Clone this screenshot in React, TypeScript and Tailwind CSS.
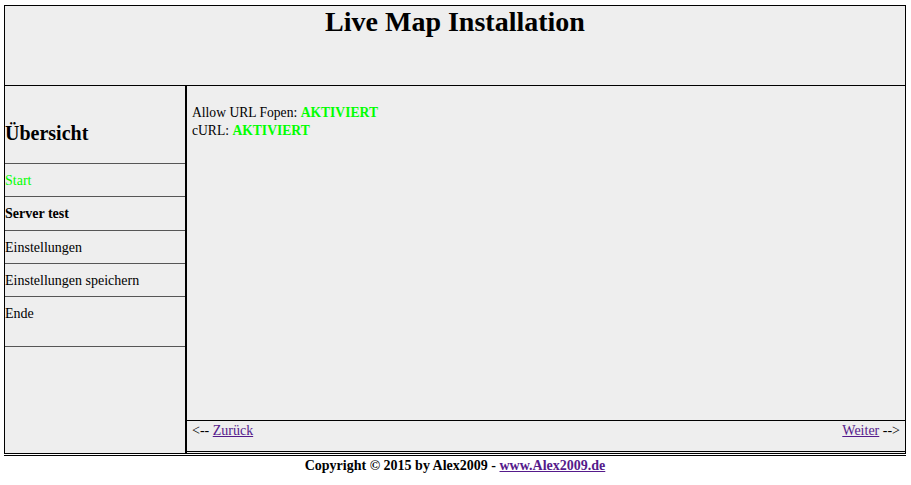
const serif = { fontFamily: '"Liberation Serif", "Times New Roman", serif' }

const menu = [
  { label: 'Start', cls: 'text-[#00ff00]', h: 'h-[32px]' },
  { label: 'Server test', cls: 'font-bold', h: 'h-[33px]' },
  { label: 'Einstellungen', cls: '', h: 'h-[32px]' },
  { label: 'Einstellungen speichern', cls: '', h: 'h-[32px]' },
]

export default function App() {
  return (
    <div className="min-h-[485px] bg-white text-black text-[14px]" style={serif}>
      <div className="pl-[4px] pr-[5px] pt-[5px]">
        <div className="border border-black bg-[#eeeeee] flex flex-col">
          {/* header */}
          <div className="h-[80px] border-b border-black">
            <h1 className="text-center text-[28px] font-bold leading-[32px]">Live Map Installation</h1>
          </div>

          <div className="flex h-[367px]">
            {/* sidebar */}
            <div className="w-[182px] border-r-2 border-black flex flex-col">
              <div className="h-[77px] pt-[35px]">
                <h2 className="text-[20px] font-bold leading-[24px]">Übersicht</h2>
              </div>
              <div className="h-px bg-[#555555]" />
              {menu.map((m) => (
                <div key={m.label}>
                  <div className={`${m.h} flex items-center ${m.cls}`}>{m.label}</div>
                  <div className="h-px bg-[#555555]" />
                </div>
              ))}
              <div className="h-[49px]">
                <div className="h-[32px] flex items-center">Ende</div>
              </div>
              <div className="h-px bg-[#555555]" />
            </div>

            {/* main */}
            <div className="flex-1 flex flex-col">
              <div className="flex-1 pl-[5px] pt-[18px] leading-[18px] text-[13.6px]">
                <div>
                  Allow URL Fopen: <span className="font-bold text-[#00ff00]">AKTIVIERT</span>
                </div>
                <div>
                  cURL: <span className="font-bold text-[#00ff00]">AKTIVIERT</span>
                </div>
              </div>
              <div className="h-[32px] border-t border-b border-black flex justify-between px-[5px] pt-[2px] leading-[16px]">
                <span>
                  &lt;-- <a href="#" className="text-[#551a8b] underline">Zurück</a>
                </span>
                <span>
                  <a href="#" className="text-[#551a8b] underline">Weiter</a> --&gt;
                </span>
              </div>
              <div className="h-px" />
            </div>
          </div>
        </div>
        <div className="mt-px h-px bg-black" />
        <div className="text-center font-bold pt-[1px] leading-[18px]">
          Copyright © 2015 by Alex2009 - <a href="#" className="text-[#551a8b] underline">www.Alex2009.de</a>
        </div>
      </div>
    </div>
  )
}
